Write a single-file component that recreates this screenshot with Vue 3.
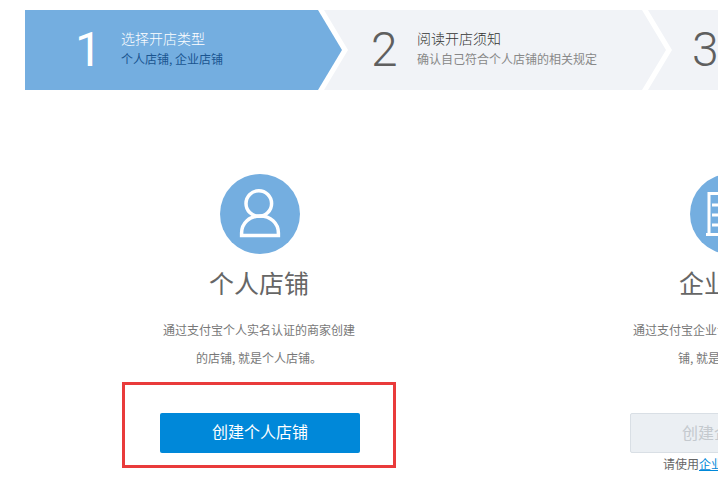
<script setup>
const steps = [
  { n: 1, title: '选择开店类型', sub: '个人店铺, 企业店铺', on: true },
  { n: 2, title: '阅读开店须知', sub: '确认自己符合个人店铺的相关规定' },
  { n: 3, title: '填写店铺信息', sub: '完善店铺基本信息' }
]
</script>

<template>
  <div class="page">
    <div class="steps">
      <div v-for="s in steps" :key="s.n" class="step" :class="{ on: s.on }">
        <span class="num">{{ s.n }}</span>
        <div class="txt">
          <div class="ttl">{{ s.title }}</div>
          <div class="sub">{{ s.sub }}</div>
        </div>
      </div>
    </div>

    <div class="cols">
      <section class="col">
        <div class="circle">
          <svg width="80" height="80" viewBox="0 0 80 80" fill="none" stroke="#fff" stroke-width="3.500">
            <circle cx="38.800" cy="29.500" r="12.800" />
            <path d="M21.600 61.500v-2.500c0-10 8-17 18.400-17s18.400 7 18.400 17v2.500z" />
          </svg>
        </div>
        <h2>个人店铺</h2>
        <p>通过支付宝个人实名认证的商家创建的店铺, 就是个人店铺。</p>
        <div class="action boxed">
          <button class="btn">创建个人店铺</button>
        </div>
      </section>

      <section class="col">
        <div class="circle">
          <svg width="80" height="80" viewBox="0 0 80 80" fill="none" stroke="#fff" stroke-width="3">
            <path d="M19 19.500h42v41H19zM16 60.500h48M22 31h36M22 41h36M22 51h36" />
          </svg>
        </div>
        <h2>企业店铺</h2>
        <p>通过支付宝企业认证的商家创建的店铺, 就是企业店铺。</p>
        <div class="action">
          <button class="btn off" disabled>创建企业店铺</button>
          <div class="note">请使用<a>企业支付宝账号</a>。</div>
        </div>
      </section>
    </div>
  </div>
</template>

<style>
html, body { margin: 0; overflow: hidden; background: #fff; }
</style>

<style scoped>
.page {
  width: 718px;
  height: 483px;
  overflow: hidden;
  font-family: "Noto Sans CJK SC", "Liberation Sans", sans-serif;
  color: #666;
}
.steps {
  display: flex;
  width: 1100px;
  height: 80px;
  margin: 10px 0 0 25px;
}
.step {
  flex: 0 0 342px;
  margin-right: -18px;
  height: 80px;
  display: flex;
  align-items: center;
  padding-left: 47px;
  box-sizing: border-box;
  background: #f1f3f7;
  clip-path: polygon(0 0, 318px 0, 342px 40px, 318px 80px, 0 80px, 24px 40px);
}
.step:last-child { padding-left: 44px; }
.step.on {
  flex-basis: 317px;
  background: #74aee0;
  padding-left: 50px;
  clip-path: polygon(0 0, 293px 0, 317px 40px, 293px 80px, 0 80px);
}
.num {
  width: 46px;
  font: 300 48px/80px Roboto, "Liberation Sans", sans-serif;
  color: #5f5f5f;
}
.on .num { color: #fff; font-weight: 400; }
.txt { padding-bottom: 3px; }
.ttl { font-size: 14px; line-height: 20px; font-weight: 300; color: #333; }
.sub { margin-top: 1px; font-size: 12px; line-height: 20px; color: #888; white-space: nowrap; }
.on .ttl { color: #fff; }
.on .sub { color: #1a5590; }

.cols {
  display: flex;
  width: 940px;
  margin-left: 25px;
  padding-top: 84px;
}
.col {
  flex: 0 0 470px;
  display: flex;
  flex-direction: column;
  align-items: center;
}
.circle {
  width: 80px;
  height: 80px;
  border-radius: 50%;
  background: #74aee0;
}
.circle svg { display: block; }
h2 {
  margin: 9px 2px 0 0;
  font-size: 25px;
  line-height: 38px;
  font-weight: 400;
  color: #666;
}
p {
  width: 192px;
  margin: 15px 2px 0 0;
  font-size: 12px;
  line-height: 28px;
  color: #777;
  text-align: center;
}
.action {
  box-sizing: border-box;
  width: 274px;
  height: 86px;
  margin: 10px 2px 0 0;
  padding: 28px 0 0 2px;
  border: 3px solid transparent;
  display: flex;
  flex-direction: column;
  align-items: center;
}
.boxed { border-color: #e93b3b; }
.btn {
  flex: none;
  width: 200px;
  height: 40px;
  padding: 0 0 3px;
  border: 0;
  border-radius: 2px;
  background: #0088d9;
  color: #fff;
  font: 400 16px/37px "Noto Sans CJK SC", sans-serif;
}
.btn.off {
  background: #ebeff3;
  border: 1px solid #d9dfe5;
  color: #c4c9ce;
}
.note {
  font-size: 12px;
  line-height: 20px;
  margin-top: 1px;
  padding-right: 2px;
  color: #666;
  white-space: nowrap;
}
.note a { color: #0088d9; text-decoration: underline; }
</style>
